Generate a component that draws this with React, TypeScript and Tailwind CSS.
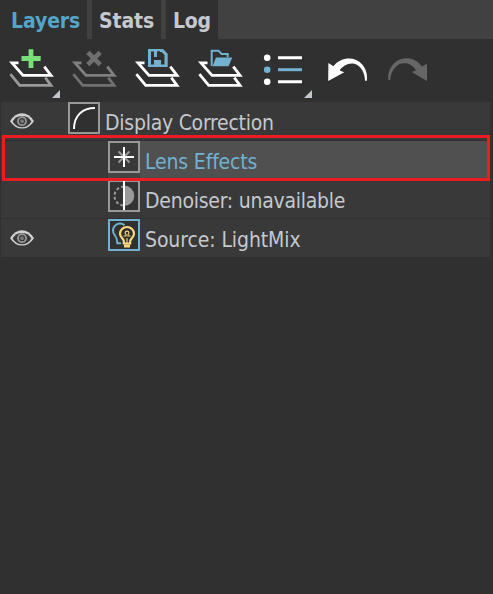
import type { ReactNode } from "react";
import clsx from "clsx";

interface LayerRowProps {
  label: string;
  icon: ReactNode;
  visible?: boolean;
  selected?: boolean;
  nested?: boolean;
  labelClass: string;
}

const tabs = [
  { label: "Layers", box: "w-[87px] pl-[11px]", text: "text-[#55a5c8] tracking-[-0.1px]" },
  { label: "Stats", box: "w-[69px] pl-[7px]", text: "text-[#c5c8ce] tracking-[-0.1px]" },
  { label: "Log", box: "w-[52px] pl-[7px]", text: "text-[#c5c8ce] tracking-[-0.3px]" },
];

function ToolButton({ label, children }: { label: string; children: ReactNode }) {
  return (
    <button type="button" aria-label={label} className="h-[63px] w-[63px] shrink-0">
      <svg width="63" height="63" viewBox="0 0 63 63" fill="none">
        {children}
      </svg>
    </button>
  );
}

function Sheets({ top = "#fff", bottom = "#fff" }: { top?: string; bottom?: string }) {
  return (
    <>
      <path d="M10.4 35.2 19.7 46.4H51L45.3 38.7" stroke={bottom} strokeWidth="2.8" />
      <path d="M18.5 23.8H12L23 36.4H51L44.3 27.7" stroke={top} strokeWidth="2.8" />
    </>
  );
}

function Corner() {
  return <path d="M60 51V59H52Z" fill="#c2c6cc" />;
}

function Eye() {
  return (
    <svg width="24" height="16" viewBox="0 0 24 16" fill="none">
      <path d="M0 8.2Q5 .3 12 .3T24 8.2Q19 15.6 12 15.6T0 8.2Z" fill="#d0d0d0" />
      <path d="M2.6 8.4Q6 3 12 3T21.4 8.4Q18 14.2 12 14.2T2.6 8.4Z" fill="#393939" />
      <circle cx="12" cy="8.2" r="4" stroke="#999" strokeWidth="1.8" />
      <circle cx="12" cy="8.2" r="2" fill="#777" />
    </svg>
  );
}

function LayerRow({ label, icon, visible, selected, nested, labelClass }: LayerRowProps) {
  return (
    <div className="flex h-[39px] border-b border-[#303030] bg-[#393939]">
      <div className={clsx("shrink-0 pt-[11px] pl-[9px]", nested ? "w-[107px]" : "w-[67px]")}>
        {visible && <Eye />}
      </div>
      <div className={clsx("flex flex-1", selected && "bg-[#505050]")}>
        <div className={clsx("w-8 shrink-0", selected && "bg-[#444]")}>{icon}</div>
        <span
          className={clsx(
            "pt-[9px] text-[21px] leading-[24px] whitespace-nowrap",
            selected ? "text-[#72b2d0]" : "text-[#c5c8ce]",
            labelClass
          )}
        >
          {label}
        </span>
      </div>
    </div>
  );
}

const curveIcon = (
  <svg width="32" height="32" viewBox="0 0 32 32" fill="none">
    <rect x="1" y="1" width="30" height="30" fill="#303030" stroke="#999" strokeWidth="2" />
    <path d="M6 27C6 14 14 6 27 6" stroke="#fff" strokeWidth="2" />
  </svg>
);

const lensIcon = (
  <svg width="32" height="32" viewBox="0 0 32 32" fill="none">
    <rect x="1" y="1" width="30" height="30" fill="#393939" stroke="#999" strokeWidth="2" />
    <path d="M10.5 10.5 21.5 21.5M21.5 10.5 10.5 21.5" stroke="#999" strokeWidth="2" />
    <path d="M16 6V26M6 16H26" stroke="#fff" strokeWidth="2" />
  </svg>
);

const denoiserIcon = (
  <svg width="32" height="32" viewBox="0 0 32 32" fill="none">
    <rect x="1" y="1" width="30" height="30" fill="#333" stroke="#999" strokeWidth="2" />
    <path d="M16 6.5A9.5 9.5 0 0 0 16 25.5" stroke="#999" strokeWidth="2" strokeDasharray="3 2.2" />
    <path d="M16 5.5A10.2 10.2 0 0 1 16 26Z" fill="#999" />
    <path d="M16 0V30" stroke="#fff" strokeWidth="2" />
  </svg>
);

const lightMixIcon = (
  <svg width="32" height="32" viewBox="0 0 32 32" fill="none">
    <rect x="1" y="1" width="30" height="30" fill="#303030" stroke="#72b2d0" strokeWidth="2" />
    <path
      d="M16.5 6.2C14 3.8 9.5 3.8 6.8 6.8C4.4 9.5 4.5 13.5 6.7 16C8.3 18 9.2 19.6 9.4 24.3H13"
      stroke="#72b2d0"
      strokeWidth="2"
    />
    <path
      d="M15.8 24.5V22C15.5 19.5 12 18.5 12 14.8C12 10.9 15 8 19 8S26 10.9 26 14.8C26 18.5 22.5 19.5 22.2 22V24.5Z"
      fill="#303030"
      stroke="#fada7d"
      strokeWidth="2.2"
    />
    <path d="M16 27H22" stroke="#fada7d" strokeWidth="3" />
    <path d="M15.5 17H18V15.4A1.8 1.8 0 1 1 20 15.4V17H22.5M19 19V24" stroke="#fada7d" strokeWidth="1.1" />
  </svg>
);

export default function App() {
  return (
    <div className="h-[594px] w-[493px] overflow-hidden bg-[#303030] font-['DejaVu_Sans_Condensed','DejaVu_Sans',sans-serif] [font-stretch:condensed]">
      {/* Tabs */}
      <div className="flex h-[39px] gap-[5px] bg-[#414141]">
        {tabs.map((tab) => (
          <div key={tab.label} className={clsx("h-[39px] bg-[#303030]", tab.box)}>
            <span className={clsx("block pt-[9px] text-[21px] leading-[24px] font-bold", tab.text)}>
              {tab.label}
            </span>
          </div>
        ))}
      </div>

      {/* Toolbar */}
      <div className="flex h-[63px]">
        <ToolButton label="Add layer">
          <Sheets bottom="#999" />
          <path d="M31 9.5V29M21.3 19.3H40.8" stroke="#303030" strokeWidth="7" />
          <path d="M31 10.3V29M21.5 19.5H40.7" stroke="#78df79" strokeWidth="4.8" />
          <Corner />
        </ToolButton>
        <ToolButton label="Delete layer">
          <Sheets top="#808080" bottom="#707070" />
          <path d="M24.8 13.3 37.2 25.7M37.2 13.3 24.8 25.7" stroke="#707070" strokeWidth="4.6" />
        </ToolButton>
        <ToolButton label="Save layers">
          <Sheets />
          <path d="M20 8.5H43V29.5H20Z" fill="#303030" />
          <path
            fillRule="evenodd"
            d="M22 10H37L41.7 14.7V28H22ZM25 12.5V25.5H28V21H35V25.5H38.5V15.8L35.5 13H34V18H31V12.5H34V18H28V12.5Z"
            fill="#72b2d0"
          />
          <path d="M31.5 12.5H34V18H31.5Z" fill="#303030" />
        </ToolButton>
        <ToolButton label="Load layers">
          <Sheets />
          <path d="M20 9H44L41 29H20Z" fill="#303030" />
          <path d="M22.7 27V11.7H29.5L32.5 15H38.7V18" stroke="#72b2d0" strokeWidth="2" />
          <path d="M27 18.6H43.3L39.5 27.3H23.5Z" fill="#72b2d0" />
        </ToolButton>
        <ToolButton label="Layer list">
          <circle cx="15.2" cy="18.7" r="3.3" fill="#fff" />
          <circle cx="15.2" cy="30.7" r="3.3" fill="#72b2d0" />
          <circle cx="15.2" cy="42.7" r="3.3" fill="#fff" />
          <path d="M26 18.7H50M26 42.7H50" stroke="#fff" strokeWidth="3" />
          <path d="M26 30.7H50" stroke="#72b2d0" strokeWidth="3" />
          <Corner />
        </ToolButton>
        <ToolButton label="Undo">
          <path
            d="M13.4 24 18.4 27.3C26 17.5 40 17.2 47 25.2C51.2 30 52.7 36 51.8 41.8H50C50 34 46 26.2 39 24.7C33.5 23.5 27.2 27.2 24.7 31.4L29.3 33.3 13.2 42Z"
            fill="#fff"
          />
        </ToolButton>
        <ToolButton label="Redo">
          <path
            d="M49 24.7 44 27.5C36 17.3 24 17.2 16 24.4C11.5 29 9.5 35 10.4 41H12.3C12.3 34 17 26 23.5 24.5C29.5 23.2 35 26 38 31.2L33.8 33 49 42Z"
            fill="#666"
          />
        </ToolButton>
      </div>

      {/* Layer tree */}
      <div className="relative ml-px w-[489px]">
        <LayerRow label="Display Correction" icon={curveIcon} visible labelClass="pl-[5px] tracking-[-0.25px]" />
        <LayerRow label="Lens Effects" icon={lensIcon} nested selected labelClass="pl-[5px] tracking-[-0.15px]" />
        <LayerRow label="Denoiser: unavailable" icon={denoiserIcon} nested labelClass="pl-[5px] tracking-[-0.25px]" />
        <LayerRow label="Source: LightMix" icon={lightMixIcon} nested visible labelClass="pl-[5px] tracking-[-0.1px]" />
        {/* Highlight frame */}
        <div className="absolute top-[33px] left-px h-[46px] w-[488px] border-3 border-[#ed1c24]" />
      </div>
    </div>
  );
}
